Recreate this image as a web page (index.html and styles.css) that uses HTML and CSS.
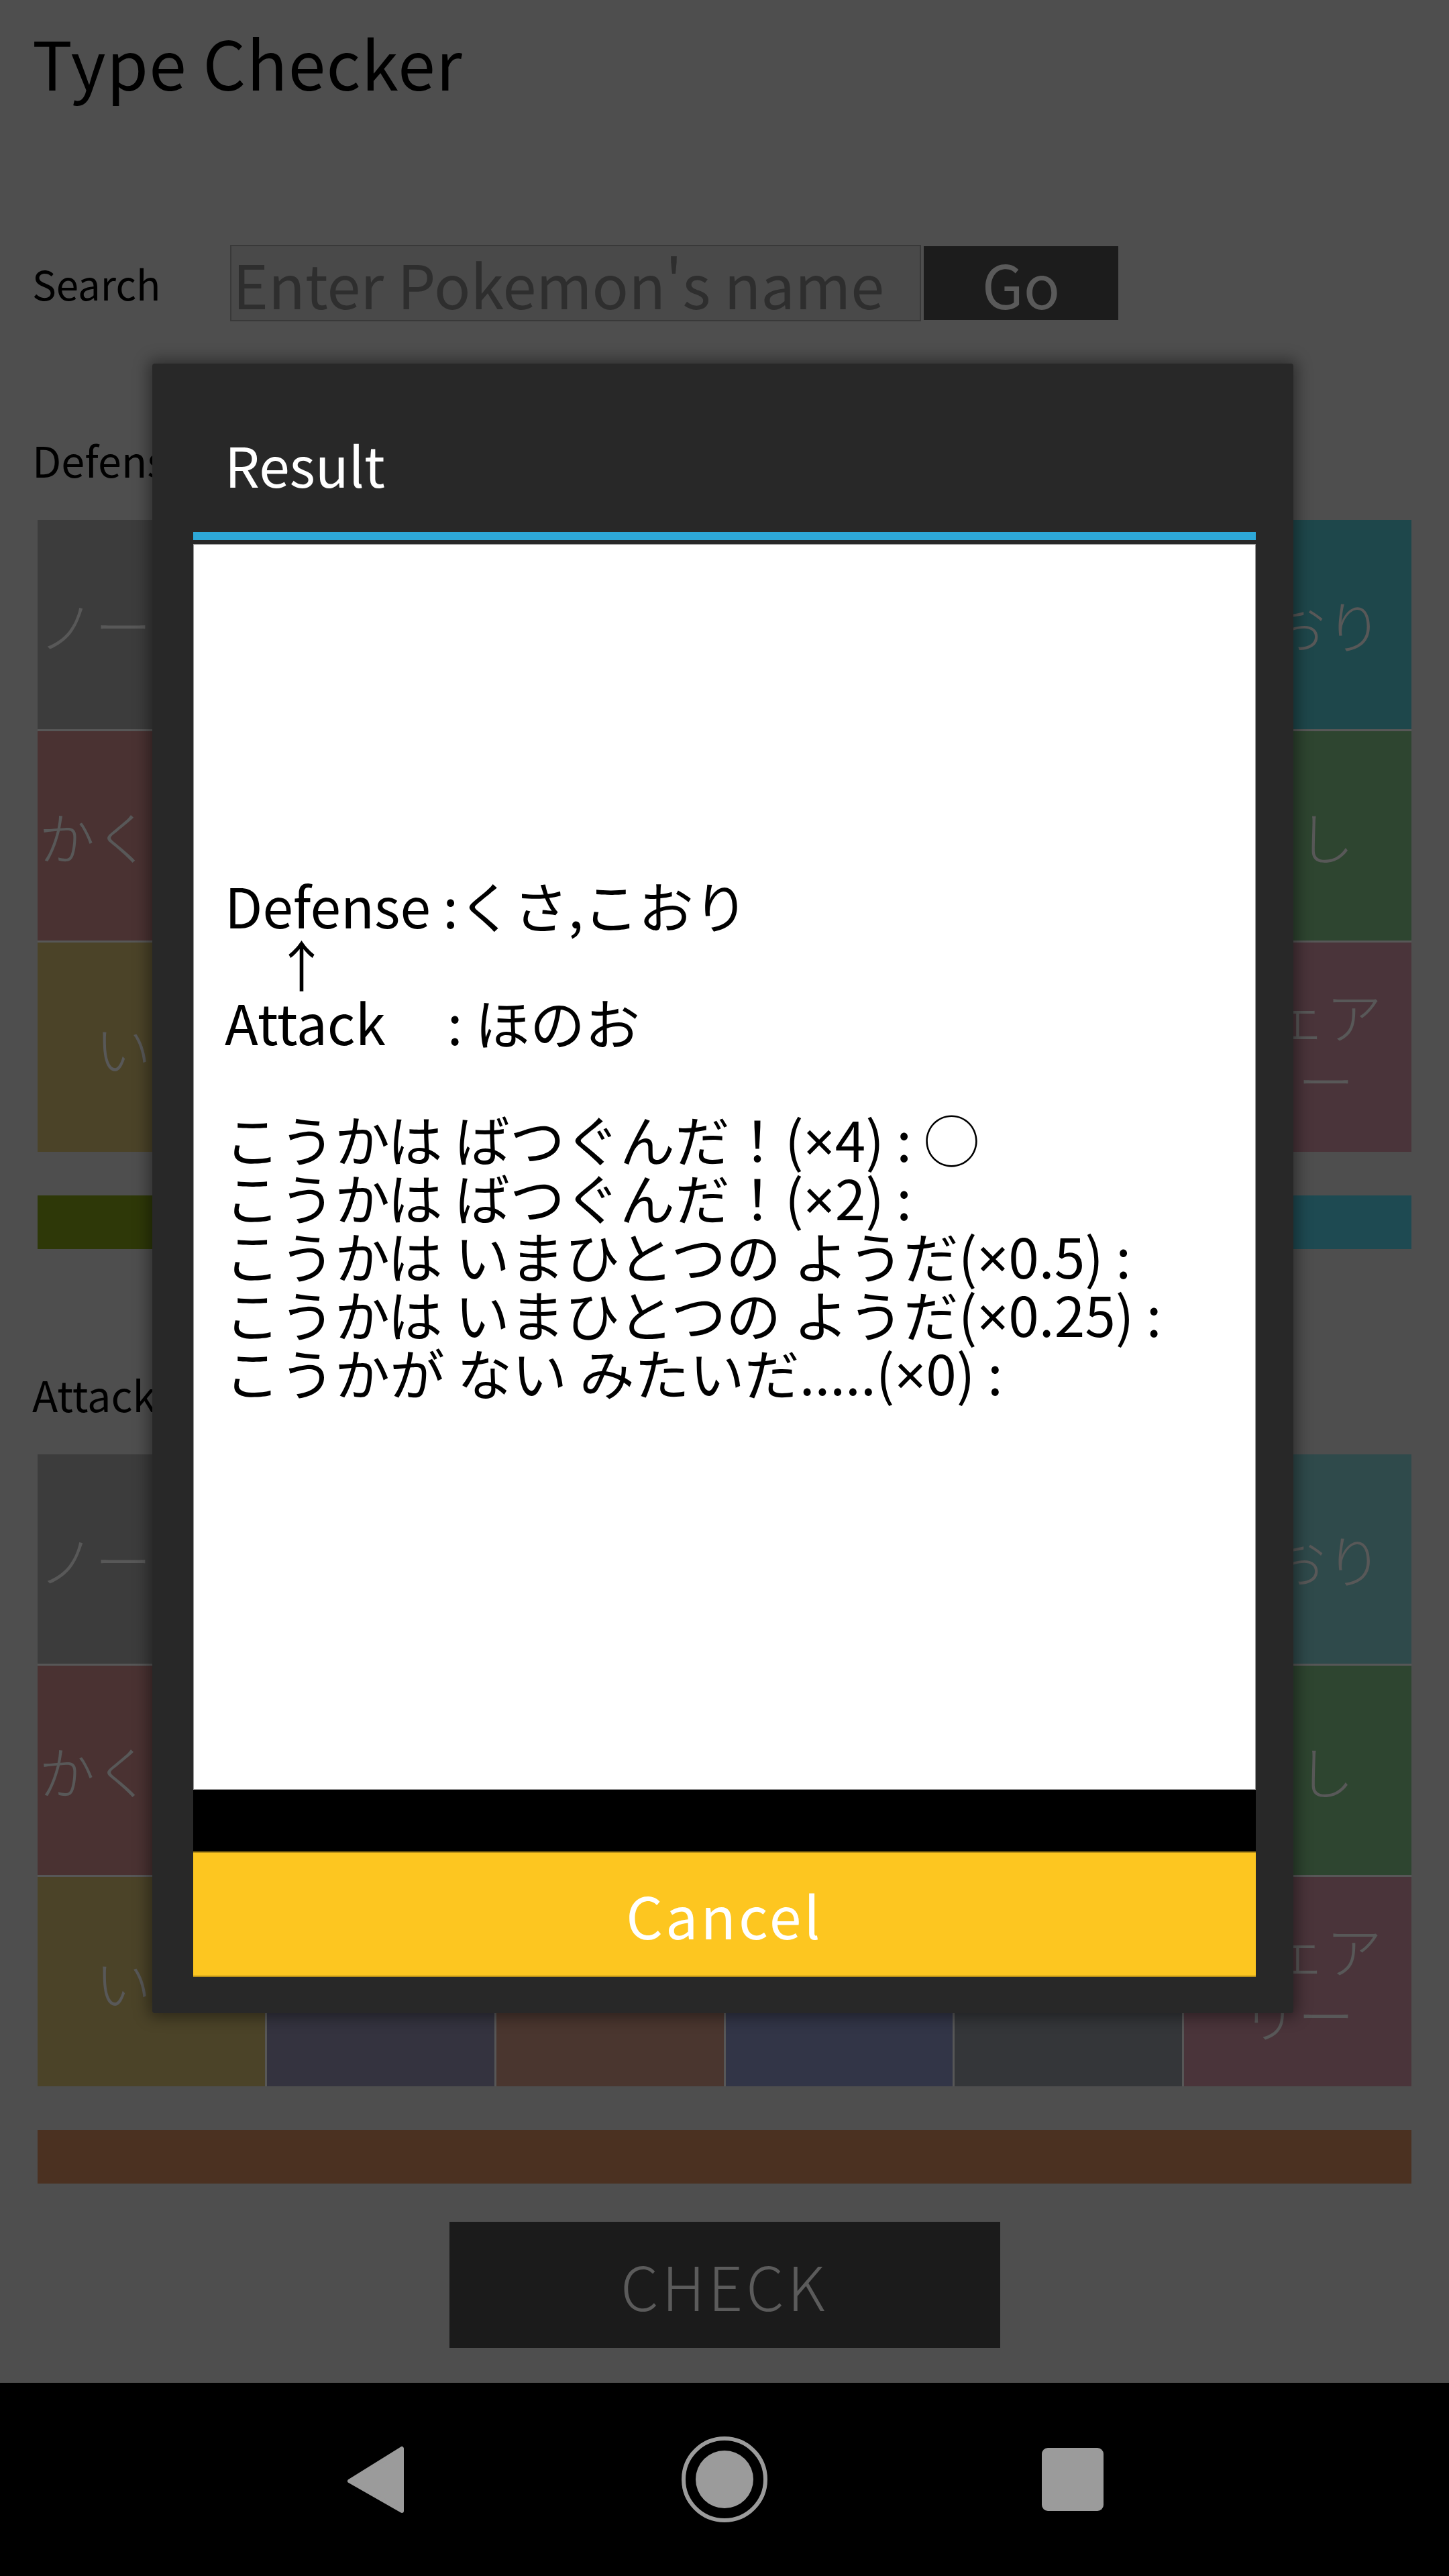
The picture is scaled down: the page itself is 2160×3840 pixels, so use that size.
FILE: index.html
```html
<!DOCTYPE html>
<html lang="ja">
<head>
<meta charset="utf-8">
<title>Type Checker</title>
<link rel="stylesheet" href="styles.css">
</head>
<body>
<div class="screen">
  <main class="app">
    <h1 class="title">Type Checker</h1>
    <div class="search">
      <label class="search-label" for="poke">Search</label>
      <input class="search-input" id="poke" type="text" placeholder="Enter Pokemon's name">
      <button class="go">Go</button>
    </div>

    <h2 class="section-label">Defense</h2>
    <div class="type-grid">
      <div class="tile t-normal">ノーマル</div>
      <div class="tile t-fire">ほのお</div>
      <div class="tile t-water">みず</div>
      <div class="tile t-electric">でんき</div>
      <div class="tile t-grass">くさ</div>
      <div class="tile t-ice">こおり</div>
      <div class="tile t-fighting">かくとう</div>
      <div class="tile t-poison">どく</div>
      <div class="tile t-ground">じめん</div>
      <div class="tile t-flying">ひこう</div>
      <div class="tile t-psychic">エスパー</div>
      <div class="tile t-bug">むし</div>
      <div class="tile t-rock">いわ</div>
      <div class="tile t-ghost">ゴースト</div>
      <div class="tile t-dark">あく</div>
      <div class="tile t-dragon">ドラゴン</div>
      <div class="tile t-steel">はがね</div>
      <div class="tile t-fairy">フェアリー</div>
    </div>
    <div class="bar">
      <span class="bar-seg b-grass"></span>
      <span class="bar-seg b-ice"></span>
    </div>

    <h2 class="section-label attack-label">Attack</h2>
    <div class="type-grid">
      <div class="tile t-normal">ノーマル</div>
      <div class="tile t-fire">ほのお</div>
      <div class="tile t-water">みず</div>
      <div class="tile t-electric">でんき</div>
      <div class="tile t-grass">くさ</div>
      <div class="tile t-ice2">こおり</div>
      <div class="tile t-fighting">かくとう</div>
      <div class="tile t-poison">どく</div>
      <div class="tile t-ground">じめん</div>
      <div class="tile t-flying">ひこう</div>
      <div class="tile t-psychic">エスパー</div>
      <div class="tile t-bug">むし</div>
      <div class="tile t-rock">いわ</div>
      <div class="tile t-ghost">ゴースト</div>
      <div class="tile t-dark">あく</div>
      <div class="tile t-dragon">ドラゴン</div>
      <div class="tile t-steel">はがね</div>
      <div class="tile t-fairy">フェアリー</div>
    </div>
    <div class="bar">
      <span class="bar-seg b-fire"></span>
    </div>

    <div class="check-wrap">
      <button class="check">CHECK</button>
    </div>
  </main>

  <nav class="navbar">
    <svg class="nav-icon" viewBox="0 0 130 130" aria-label="Back">
      <path d="M103 19 L103 112 L25 67.5 Z" fill="#9b9b9b" stroke="#9b9b9b" stroke-width="6" stroke-linejoin="round"/>
    </svg>
    <svg class="nav-icon" viewBox="0 0 130 130" aria-label="Home">
      <circle cx="65" cy="65" r="61" fill="none" stroke="#9b9b9b" stroke-width="6"/>
      <circle cx="65" cy="65" r="43" fill="#9b9b9b"/>
    </svg>
    <svg class="nav-icon" viewBox="0 0 130 130" aria-label="Recents">
      <rect x="19" y="18" width="92" height="94" rx="9" fill="#9b9b9b"/>
    </svg>
  </nav>

  <div class="dialog" role="dialog">
    <h3 class="dialog-title">Result</h3>
    <div class="dialog-rule"></div>
    <div class="dialog-body">
<p class="result-text">Defense :くさ,こおり
    ↑
Attack     : ほのお

こうかは ばつぐんだ！(<span class="times">×</span>4) : ◯
こうかは ばつぐんだ！(<span class="times">×</span>2) : 
こうかは いまひとつの ようだ(<span class="times">×</span>0.5) : 
こうかは いまひとつの ようだ(<span class="times">×</span>0.25) : 
こうかが ない みたいだ.....(<span class="times">×</span>0) : </p>
    </div>
    <div class="dialog-spacer"></div>
    <button class="cancel">Cancel</button>
  </div>
</div>
</body>
</html>
```

FILE: styles.css
```css
* {
  box-sizing: border-box;
  margin: 0;
  padding: 0;
}

html,
body {
  background: #4e4e4e;
}

body {
  width: 2160px;
  height: 3840px;
  overflow: hidden;
  font-family: "Noto Sans CJK JP", "Noto Sans", sans-serif;
}

.screen {
  position: relative;
  width: 2160px;
  height: 3840px;
}

.app {
  height: 3552px;
  padding: 22px 56px 0 48px;
  display: flex;
  flex-direction: column;
}

.title {
  font-size: 100px;
  font-weight: 400;
  line-height: 140px;
  letter-spacing: 1.3px;
  color: #000;
}

.search {
  display: flex;
  align-items: center;
  margin-top: 203px;
  height: 114px;
}

.search-label {
  width: 295px;
  font-size: 60px;
  line-height: 80px;
  color: #000;
}

.search-input {
  width: 1030px;
  height: 114px;
  background: #494949;
  border: 2px solid #393939;
  font-family: inherit;
  font-size: 90px;
  padding: 0 2px;
  color: #2e2e2e;
  outline: none;
}

.search-input::placeholder {
  color: #2e2e2e;
  opacity: 1;
}

.go {
  width: 290px;
  height: 110px;
  margin-left: 4px;
  background: #1c1c1c;
  border: none;
  color: #5a5a5a;
  font-family: inherit;
  font-size: 90px;
  line-height: 110px;
}

.section-label {
  font-size: 63px;
  font-weight: 400;
  line-height: 90px;
  margin-top: 161px;
  color: #000;
}

.attack-label {
  margin-top: 171px;
}

.type-grid {
  margin: 45px 0 0 8px;
  display: grid;
  grid-template-columns: repeat(6, 1fr);
  grid-auto-rows: 312px;
  gap: 3px;
  background: #575757;
}

.tile {
  display: flex;
  align-items: center;
  justify-content: center;
  text-align: center;
  font-size: 84px;
  font-weight: 300;
  line-height: 96px;
  color: #585858;
  line-break: strict;
  overflow: hidden;
}

.t-normal { background: #3c3c3c; }
.t-fire { background: #4b3020; }
.t-water { background: #263a52; }
.t-electric { background: #4d4515; }
.t-grass { background: #2b4424; }
.t-ice { background: #1e474b; }
.t-ice2 { background: #2f4a4b; }
.t-fighting { background: #4a3232; }
.t-poison { background: #3f2d44; }
.t-ground { background: #4a4230; }
.t-flying { background: #363a4f; }
.t-psychic { background: #4a2f3b; }
.t-bug { background: #2e4530; }
.t-rock { background: #4b4328; }
.t-ghost { background: #34333f; }
.t-dark { background: #4a362f; }
.t-dragon { background: #323547; }
.t-steel { background: #343639; }
.t-fairy { background: #4a343a; }

.bar {
  margin: 65px 0 0 8px;
  height: 80px;
  display: flex;
}

.bar-seg {
  flex: 1;
}

.b-grass { background: #2e3808; }
.b-ice { background: #1e4a52; }
.b-fire { background: #4b3121; }

.check-wrap {
  margin: 57px 0 0 8px;
  display: flex;
  justify-content: center;
}

.check {
  width: 821px;
  height: 188px;
  background: #1b1b1b;
  border: none;
  color: #5b5b5b;
  font-family: inherit;
  font-size: 90px;
  font-weight: 300;
  letter-spacing: 5px;
}

.navbar {
  height: 288px;
  background: #000;
  display: flex;
  align-items: center;
  justify-content: center;
  gap: 389px;
}

.nav-icon {
  width: 130px;
  height: 130px;
  display: block;
}

/* Dialog overlay */
.dialog {
  position: absolute;
  left: 227px;
  top: 542px;
  width: 1701px;
  height: 2459px;
  background: #282828;
  border-radius: 4px;
  box-shadow: 0 0 22px 6px rgba(0, 0, 0, 0.4);
  padding: 100px 56px 54px 61px;
  display: flex;
  flex-direction: column;
}

.dialog-title {
  font-size: 82px;
  font-weight: 400;
  line-height: 100px;
  color: #fff;
  padding-left: 47px;
}

.dialog-rule {
  margin-top: 51px;
  height: 12px;
  background: #2da8d8;
}

.dialog-body {
  margin-top: 6px;
  flex: 1;
  background: #fff;
  border: 1px solid #9a9a9a;
  display: flex;
  flex-direction: column;
  justify-content: center;
  padding: 0 0 87px 46px;
}

.result-text {
  font-size: 82px;
  line-height: 87px;
  color: #000;
  white-space: pre;
}

.times {
  font-family: "Noto Sans", "DejaVu Sans", sans-serif;
  line-height: 0;
}

.dialog-spacer {
  height: 92px;
  background: #000;
}

.cancel {
  height: 187px;
  background: #fdc620;
  border: none;
  border-top: 2px solid #b8901a;
  border-bottom: 2px solid #b8901a;
  color: #fff;
  font-family: inherit;
  font-size: 86px;
  letter-spacing: 4px;
}
```
